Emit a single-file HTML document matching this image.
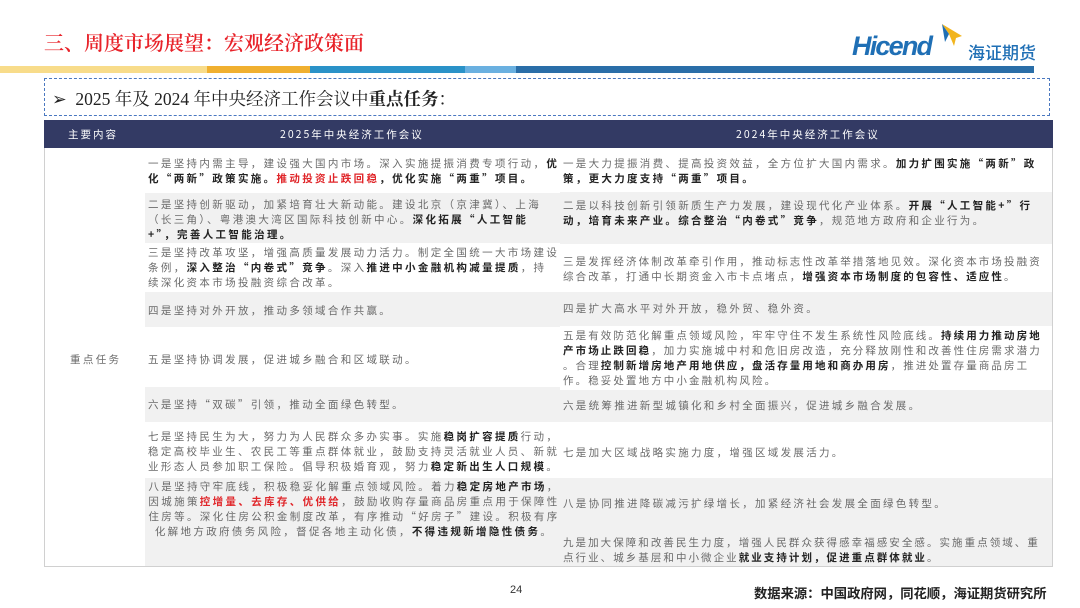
<!DOCTYPE html>
<html><head><meta charset="utf-8"><style>
*{margin:0;padding:0;box-sizing:border-box}
body{width:1080px;height:608px;background:#fff;position:relative;overflow:hidden;font-family:"Liberation Serif","Noto Serif CJK SC","Noto Sans CJK SC",serif}
.a{position:absolute}
.t{position:absolute;font-size:10.5px;line-height:15px;letter-spacing:2.35px;color:#6a6a6a;white-space:nowrap;font-family:"Noto Sans CJK SC",sans-serif}
.r2{letter-spacing:2.3px}
.t b{color:#222;font-weight:bold}
.t r{color:#e0262a;font-weight:bold}
.g{position:absolute;background:#f1f1f1}
</style></head><body>
<div class="a" style="left:44px;top:27px;font-size:20px;color:#e8232a;font-family:'Noto Serif CJK SC',serif;font-weight:600;letter-spacing:0px">三、周度市场展望：宏观经济政策面</div>
<div class="a" style="left:852px;top:31px;font-size:27px;font-style:italic;font-weight:bold;color:#1f6fb5;font-family:'Liberation Sans',sans-serif;letter-spacing:-1.8px">Hicend</div>
<svg class="a" style="left:940px;top:22px" width="26" height="24"><polygon points="2,2 22,14 16,16 14,24 9,12" fill="#f2b51d"/><polygon points="2,2 9,12 5,20" fill="#1f6fb5"/></svg>
<div class="a" style="left:968px;top:39px;font-size:17px;color:#1f6fb5;font-family:'Noto Sans CJK SC',sans-serif;font-weight:500">海证期货</div>
<div class="a" style="left:0;top:66px;width:207px;height:7px;background:#f8dc8a"></div>
<div class="a" style="left:207px;top:66px;width:103px;height:7px;background:#f0b030"></div>
<div class="a" style="left:310px;top:66px;width:155px;height:7px;background:#2a92c8"></div>
<div class="a" style="left:465px;top:66px;width:51px;height:7px;background:#6ab0e0"></div>
<div class="a" style="left:516px;top:66px;width:518px;height:7px;background:#2a6ea8"></div>
<div class="a" style="left:44px;top:78px;width:1006px;height:38px;border:1.5px dashed #4a78c0"></div>
<div class="a" style="left:52px;top:86px;font-size:17.5px;color:#222">➢&nbsp; 2025 年及 2024 年中央经济工作会议中<b>重点任务</b>：</div>
<div class="a" style="left:44px;top:120px;width:1009px;height:28px;background:#333a64"></div>
<div class="a" style="left:68px;top:127px;font-size:10.5px;color:#fff;letter-spacing:2px;font-family:'Noto Sans CJK SC',sans-serif">主要内容</div>
<div class="a" style="left:280px;top:127px;font-size:10.5px;color:#fff;letter-spacing:2px;font-family:'Noto Sans CJK SC',sans-serif">2025年中央经济工作会议</div>
<div class="a" style="left:736px;top:127px;font-size:10.5px;color:#fff;letter-spacing:2px;font-family:'Noto Sans CJK SC',sans-serif">2024年中央经济工作会议</div>
<div class="a" style="left:44px;top:148px;width:1009px;height:419px;border:1px solid #d0d0d0;border-top:none"></div>
<div class="g" style="left:145px;top:193px;width:415px;height:50px"></div>
<div class="g" style="left:145px;top:292px;width:415px;height:35px"></div>
<div class="g" style="left:145px;top:387px;width:415px;height:35px"></div>
<div class="g" style="left:145px;top:478px;width:415px;height:88px"></div>
<div class="g" style="left:560px;top:192px;width:492px;height:52px"></div>
<div class="g" style="left:560px;top:292px;width:492px;height:34px"></div>
<div class="g" style="left:560px;top:390px;width:492px;height:32px"></div>
<div class="g" style="left:560px;top:478px;width:492px;height:88px"></div>
<div class="t" style="left:70px;top:352px">重点任务</div>
<div class="t" style="left:148px;top:156px">一是坚持内需主导，建设强大国内市场。深入实施提振消费专项行动，<b>优</b><br><b>化“两新”政策实施。</b><r>推动投资止跌回稳</r><b>，优化实施“两重”项目。</b></div>
<div class="t" style="left:148px;top:197px">二是坚持创新驱动，加紧培育壮大新动能。建设北京（京津冀）、上海<br>（长三角）、粤港澳大湾区国际科技创新中心。<b>深化拓展“人工智能</b><br><b>+”，完善人工智能治理。</b></div>
<div class="t" style="left:148px;top:245px">三是坚持改革攻坚，增强高质量发展动力活力。制定全国统一大市场建设<br>条例，<b>深入整治“内卷式”竞争</b>。深入<b>推进中小金融机构减量提质</b>，持<br>续深化资本市场投融资综合改革。</div>
<div class="t" style="left:148px;top:303px">四是坚持对外开放，推动多领域合作共赢。</div>
<div class="t" style="left:148px;top:352px">五是坚持协调发展，促进城乡融合和区域联动。</div>
<div class="t" style="left:148px;top:397px">六是坚持“双碳”引领，推动全面绿色转型。</div>
<div class="t" style="left:148px;top:429px">七是坚持民生为大，努力为人民群众多办实事。实施<b>稳岗扩容提质</b>行动，<br>稳定高校毕业生、农民工等重点群体就业，鼓励支持灵活就业人员、新就<br>业形态人员参加职工保险。倡导积极婚育观，努力<b>稳定新出生人口规模</b>。</div>
<div class="t" style="left:148px;top:479px;width:412px;text-align:center">八是坚持守牢底线，积极稳妥化解重点领域风险。着力<b>稳定房地产市场</b>，<br>因城施策<r>控增量、去库存、优供给</r>，鼓励收购存量商品房重点用于保障性<br>住房等。深化住房公积金制度改革，有序推动“好房子”建设。积极有序<br>化解地方政府债务风险，督促各地主动化债，<b>不得违规新增隐性债务</b>。</div>
<div class="t r2" style="left:563px;top:156px">一是大力提振消费、提高投资效益，全方位扩大国内需求。<b>加力扩围实施“两新”政</b><br><b>策，更大力度支持“两重”项目。</b></div>
<div class="t r2" style="left:563px;top:198px">二是以科技创新引领新质生产力发展，建设现代化产业体系。<b>开展“人工智能+”行</b><br><b>动，培育未来产业。综合整治“内卷式”竞争</b>，规范地方政府和企业行为。</div>
<div class="t r2" style="left:563px;top:254px;letter-spacing:2.1px">三是发挥经济体制改革牵引作用，推动标志性改革举措落地见效。深化资本市场投融资<br>综合改革，打通中长期资金入市卡点堵点，<b>增强资本市场制度的包容性、适应性</b>。</div>
<div class="t r2" style="left:563px;top:301px">四是扩大高水平对外开放，稳外贸、稳外资。</div>
<div class="t r2" style="left:563px;top:328px;letter-spacing:2.1px">五是有效防范化解重点领域风险，牢牢守住不发生系统性风险底线。<b>持续用力推动房地</b><br><b>产市场止跌回稳</b>，加力实施城中村和危旧房改造，充分释放刚性和改善性住房需求潜力<br>。合理<b>控制新增房地产用地供应，盘活存量用地和商办用房</b>，推进处置存量商品房工<br>作。稳妥处置地方中小金融机构风险。</div>
<div class="t r2" style="left:563px;top:398px">六是统筹推进新型城镇化和乡村全面振兴，促进城乡融合发展。</div>
<div class="t r2" style="left:563px;top:445px">七是加大区域战略实施力度，增强区域发展活力。</div>
<div class="t r2" style="left:563px;top:496px">八是协同推进降碳减污扩绿增长，加紧经济社会发展全面绿色转型。</div>
<div class="t r2" style="left:563px;top:535px;letter-spacing:2.05px">九是加大保障和改善民生力度，增强人民群众获得感幸福感安全感。实施重点领域、重<br>点行业、城乡基层和中小微企业<b>就业支持计划，促进重点群体就业</b>。</div>
<div class="a" style="left:510px;top:584px;font-size:11px;color:#333;font-family:'Liberation Sans',sans-serif">24</div>
<div class="a" style="left:754px;top:583px;font-size:13.3px;color:#222;font-weight:bold;font-family:'Noto Sans CJK SC',sans-serif">数据来源：中国政府网，同花顺，海证期货研究所</div>
</body></html>
